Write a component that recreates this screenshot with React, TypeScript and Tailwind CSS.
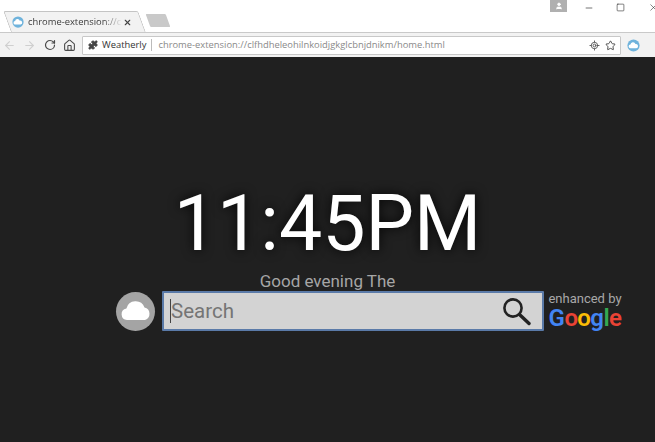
import { ArrowLeft, ArrowRight, RotateCw, Home, Star, X, Minus, Square, Puzzle, LocateFixed, User } from 'lucide-react';

function CloudBadge({ size }: { size: number }) {
    return (
        <svg width={size} height={size} viewBox="0 0 16 16" className="shrink-0">
            <circle cx="8" cy="8" r="7.5" fill="#6fb3dc" />
            <path d="M4.4 11.4a2.3 2.3 0 0 1-.2-4.6 3.2 3.2 0 0 1 6.2-.6 2.6 2.6 0 0 1 1.1 5.2z" fill="#fff" />
        </svg>
    );
}

export default function App() {
    return (
        <div className="w-[655px] h-[442px] overflow-hidden flex flex-col bg-[#202020] font-['Roboto',sans-serif]">
            {/* Browser chrome */}
            <div className="h-[57px] shrink-0 flex flex-col bg-white">
                <div className="h-[32px] flex items-end relative">
                    <div className="ml-[7px] w-[135px] h-[21px] bg-[#f2f2f2] border-t border-x border-[#c4c4c4] skew-x-[20deg] rounded-t-[2px]" />
                    <div className="ml-[6px] mb-[5px] w-[20px] h-[13px] bg-[#c9c9c9] skew-x-[20deg] rounded-[1px]" />
                    {/* tab contents sit above the skewed tab shape */}
                    <div className="absolute left-[12px] top-[14px] w-[126px] h-[16px] flex items-center">
                        <CloudBadge size={12} />
                        <span className="ml-[4px] w-[94px] whitespace-nowrap text-[9.4px] text-[#3c3c3c] font-['Open_Sans',sans-serif] [mask-image:linear-gradient(to_right,black_80%,transparent)]">chrome-extension://clfhc</span>
                        <X size={9} strokeWidth={3} className="ml-[1px] text-[#444]" />
                    </div>
                    <div className="absolute left-[550px] top-0 w-[17px] h-[12px] bg-[#b0b0b0] flex items-center justify-center">
                        <User size={8} fill="#fff" className="text-white" />
                    </div>
                    <Minus size={10} strokeWidth={1.5} className="absolute left-[584px] top-[3px] text-[#222]" />
                    <Square size={9} strokeWidth={1.5} className="absolute left-[616px] top-[3px] text-[#222]" />
                    <X size={11} strokeWidth={1.2} className="absolute left-[648px] top-[2px] text-[#222]" />
                </div>
                <div className="flex-1 flex items-center bg-[#f2f2f2] border-t border-[#c9c9c9]">
                    <ArrowLeft size={13} strokeWidth={2} className="ml-[3px] text-[#cfcfcf]" />
                    <ArrowRight size={13} strokeWidth={2} className="ml-[7px] text-[#cfcfcf]" />
                    <RotateCw size={12} strokeWidth={2.4} className="ml-[8px] text-[#4a4a4a]" />
                    <Home size={13} strokeWidth={2} className="ml-[7px] text-[#4a4a4a]" />
                    <div className="ml-[6px] w-[539px] h-[19px] flex items-center bg-white border border-[#c8c8c8] rounded-[1px]">
                        <Puzzle size={10} fill="#444" className="ml-[5px] text-[#444]" />
                        <span className="ml-[4px] text-[9.4px] text-[#333] font-['Open_Sans',sans-serif]">Weatherly</span>
                        <div className="ml-[5px] w-px h-[12px] bg-[#bbb]" />
                        <span className="ml-[6px] text-[9.4px] text-[#8a8a8a] font-['Open_Sans',sans-serif] whitespace-nowrap">chrome-extension://clfhdheleohilnkoidjgkglcbnjdnikm/home.html</span>
                        <LocateFixed size={11} className="ml-auto text-[#555]" />
                        <Star size={11} strokeWidth={2} className="ml-[5px] mr-[4px] text-[#444]" />
                    </div>
                    <div className="ml-[6px]">
                        <CloudBadge size={13} />
                    </div>
                </div>
            </div>

            {/* Page */}
            <div className="flex-1 flex flex-col items-center">
                <div className="mt-[125px] h-[85px] leading-[85px] text-[77px] font-normal text-white whitespace-nowrap [text-shadow:0_0_12px_rgba(0,0,0,0.9)]">11:45PM</div>
                <div className="mt-[4px] h-[20px] leading-[20px] text-[17px] text-[#a6a6a6]">Good evening The</div>
                <div className="self-start ml-[116px] flex items-center">
                    <div className="w-[39px] h-[39px] rounded-full bg-[#a4a4a4] flex items-center justify-center">
                        <svg width="32" height="24" viewBox="0 0 32 24">
                            <path d="M7 21a5.8 5.8 0 0 1-.6-11.5A9.5 9.5 0 0 1 24.5 8.5 6.5 6.5 0 0 1 25 21z" fill="#fff" />
                        </svg>
                    </div>
                    <div className="ml-[7px] w-[382px] h-[40px] flex items-center bg-[#d3d3d3] border-2 border-[#5a7aa8] rounded-[1px]">
                        <div className="ml-[6px] w-px h-[24px] bg-[#444]" />
                        <span className="text-[20.5px] text-[#757575]">Search</span>
                        <svg width="30" height="30" viewBox="0 0 30 30" className="ml-auto mr-[11px]">
                            <circle cx="12" cy="12" r="8.6" fill="none" stroke="#222" strokeWidth="2.6" />
                            <path d="M18.5 18.5 28 27.5" stroke="#222" strokeWidth="3.4" strokeLinecap="round" />
                        </svg>
                    </div>
                    <div className="ml-[4px] w-[74px] flex flex-col items-center">
                        <span className="text-[13px] leading-[14px] text-[#a8a8a8] whitespace-nowrap">enhanced by</span>
                        <div className="flex text-[24px] leading-[25px] font-semibold font-['Roboto',sans-serif] tracking-[-0.6px] whitespace-nowrap">
                            <span className="text-[#4285f4]">G</span>
                            <span className="text-[#ea4335]">o</span>
                            <span className="text-[#fbbc05]">o</span>
                            <span className="text-[#4285f4]">g</span>
                            <span className="text-[#34a853]">l</span>
                            <span className="text-[#ea4335]">e</span>
                        </div>
                    </div>
                </div>
            </div>
        </div>
    );
}
